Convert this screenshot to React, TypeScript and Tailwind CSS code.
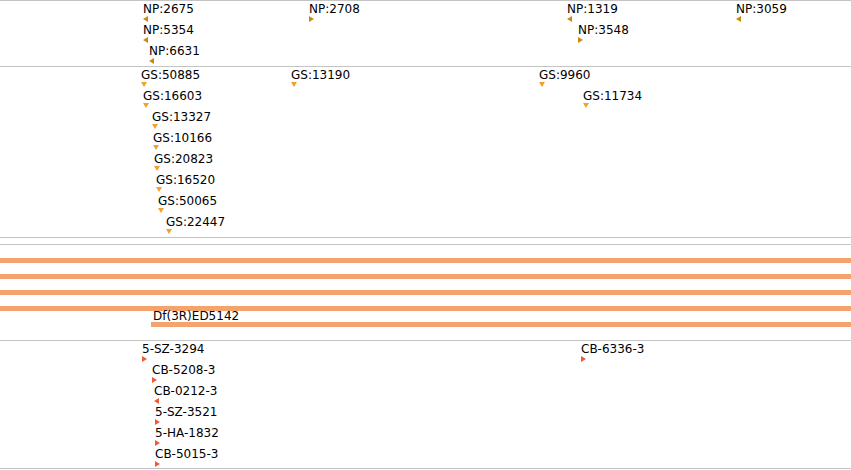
type Dir = "left" | "right" | "down";

type Feature = {
  name: string;
  x: number;
  row: number;
  dir: Dir;
};

const npFeatures: Feature[] = [
  { name: "NP:2675", x: 143, row: 0, dir: "left" },
  { name: "NP:5354", x: 143, row: 1, dir: "left" },
  { name: "NP:6631", x: 149, row: 2, dir: "left" },
  { name: "NP:2708", x: 309, row: 0, dir: "right" },
  { name: "NP:1319", x: 567, row: 0, dir: "left" },
  { name: "NP:3548", x: 578, row: 1, dir: "right" },
  { name: "NP:3059", x: 736, row: 0, dir: "left" },
];

const gsFeatures: Feature[] = [
  { name: "GS:50885", x: 141, row: 0, dir: "down" },
  { name: "GS:16603", x: 143, row: 1, dir: "down" },
  { name: "GS:13327", x: 152, row: 2, dir: "down" },
  { name: "GS:10166", x: 153, row: 3, dir: "down" },
  { name: "GS:20823", x: 154, row: 4, dir: "down" },
  { name: "GS:16520", x: 156, row: 5, dir: "down" },
  { name: "GS:50065", x: 158, row: 6, dir: "down" },
  { name: "GS:22447", x: 166, row: 7, dir: "down" },
  { name: "GS:13190", x: 291, row: 0, dir: "down" },
  { name: "GS:9960", x: 539, row: 0, dir: "down" },
  { name: "GS:11734", x: 583, row: 1, dir: "down" },
];

const cbFeatures: Feature[] = [
  { name: "5-SZ-3294", x: 142, row: 0, dir: "right" },
  { name: "CB-5208-3", x: 152, row: 1, dir: "right" },
  { name: "CB-0212-3", x: 154, row: 2, dir: "left" },
  { name: "5-SZ-3521", x: 155, row: 3, dir: "right" },
  { name: "5-HA-1832", x: 155, row: 4, dir: "right" },
  { name: "CB-5015-3", x: 155, row: 5, dir: "right" },
  { name: "CB-6336-3", x: 581, row: 0, dir: "right" },
];

function Marker({ dir, color }: { dir: Dir; color: string }) {
  const points =
    dir === "left" ? "5,0 0,3 5,6" : dir === "right" ? "0,0 5,3 0,6" : "0,0 6,0 3,5";
  return (
    <svg width={dir === "down" ? 6 : 5} height={dir === "down" ? 5 : 6} className="block">
      <polygon points={points} fill={color} />
    </svg>
  );
}

function Track({
  features,
  color,
  height,
}: {
  features: Feature[];
  color: string;
  height: string;
}) {
  return (
    <div className={`relative border-b border-[#c4c4c4] ${height}`}>
      {features.map((f) => (
        <div
          key={f.name}
          className="absolute flex flex-col"
          style={{ left: f.x, top: 1 + f.row * 21 }}
        >
          <span className="h-[14px] leading-[14px] whitespace-nowrap">{f.name}</span>
          <Marker dir={f.dir} color={color} />
        </div>
      ))}
    </div>
  );
}

export default function App() {
  return (
    <div
      className="w-[851px] h-[470px] overflow-hidden bg-white text-[12px] text-black border-t border-[#c4c4c4]"
      style={{ fontFamily: '"DejaVu Sans", sans-serif' }}
    >
      <Track features={npFeatures} color="#cc8a0a" height="h-[66px]" />
      <Track features={gsFeatures} color="#f2a02e" height="h-[171px]" />
      <div className="h-[7px] border-b border-[#c4c4c4]" />

      {/* deficiency track */}
      <div className="relative h-[96px] border-b border-[#c4c4c4]">
        <div className="flex flex-col gap-[11px] pt-[13px]">
          <div className="h-[5px] bg-[#f4a36c]" />
          <div className="h-[5px] bg-[#f4a36c]" />
          <div className="h-[5px] bg-[#f4a36c]" />
          <div className="h-[5px] bg-[#f4a36c]" />
        </div>
        <div className="absolute left-[151px] right-0 top-[65px] flex flex-col">
          <span className="h-[12px] leading-[12px] pl-[2px] whitespace-nowrap">Df(3R)ED5142</span>
          <div className="h-[5px] bg-[#f4a36c]" />
        </div>
      </div>

      <Track features={cbFeatures} color="#f2583a" height="h-[128px]" />
    </div>
  );
}
